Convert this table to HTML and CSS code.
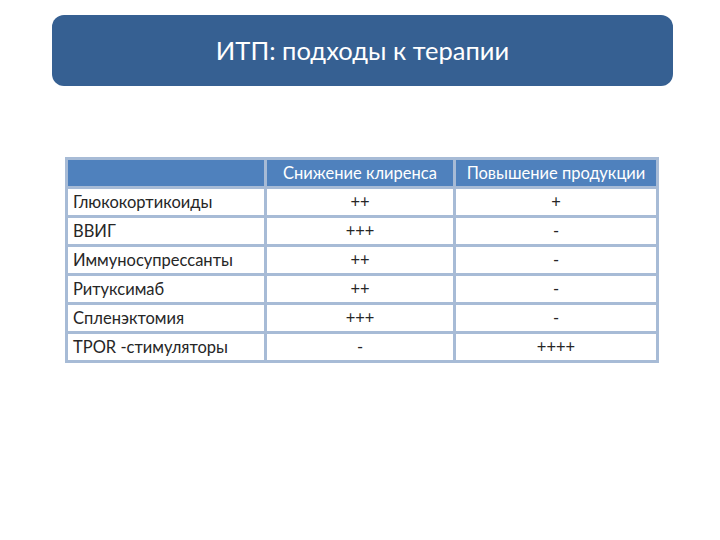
FILE: index.html
```html
<!DOCTYPE html>
<html lang="ru">
<head>
<meta charset="utf-8">
<link rel="stylesheet" href="styles.css">
</head>
<body>
<div class="slide">
  <div class="title">ИТП: подходы к терапии</div>
  <table class="grid">
    <thead>
      <tr><th class="c1"></th><th class="c2">Снижение клиренса</th><th class="c3">Повышение продукции</th></tr>
    </thead>
    <tbody>
      <tr><td class="name">Глюкокортикоиды</td><td>++</td><td>+</td></tr>
      <tr><td class="name">ВВИГ</td><td>+++</td><td>-</td></tr>
      <tr><td class="name">Иммуносупрессанты</td><td>++</td><td>-</td></tr>
      <tr><td class="name">Ритуксимаб</td><td>++</td><td>-</td></tr>
      <tr><td class="name">Спленэктомия</td><td>+++</td><td>-</td></tr>
      <tr><td class="name">TPOR -стимуляторы</td><td>-</td><td>++++</td></tr>
    </tbody>
  </table>
</div>
</body>
</html>
```
FILE: styles.css
```css
html, body {
  margin: 0;
  padding: 0;
  background: #ffffff;
}
.slide {
  width: 720px;
  height: 540px;
  padding-top: 15px;
  box-sizing: border-box;
  font-family: Lato, "Open Sans", sans-serif;
}
.title {
  margin-left: 52px;
  width: 621px;
  height: 71px;
  border-radius: 12px;
  background: #366092;
  color: #ffffff;
  font-size: 25.5px;
  display: flex;
  align-items: center;
  justify-content: center;
  box-sizing: border-box;
  padding-bottom: 2px;
}
.grid {
  margin-left: 65px;
  margin-top: 71px;
  border-collapse: collapse;
  font-size: 16.5px;
  color: #262626;
}
.grid th, .grid td {
  border: 3px solid #A7BBD6;
  height: 29px;
  padding: 0 4px;
  text-align: center;
  font-weight: normal;
  box-sizing: border-box;
}
.grid th {
  background: #4F81BD;
  color: #ffffff;
}
.grid .c1 { width: 199px; }
.grid .c2 { width: 189px; }
.grid .c3 { width: 203px; }
.grid td.name {
  text-align: left;
  padding-left: 5px;
}
```
